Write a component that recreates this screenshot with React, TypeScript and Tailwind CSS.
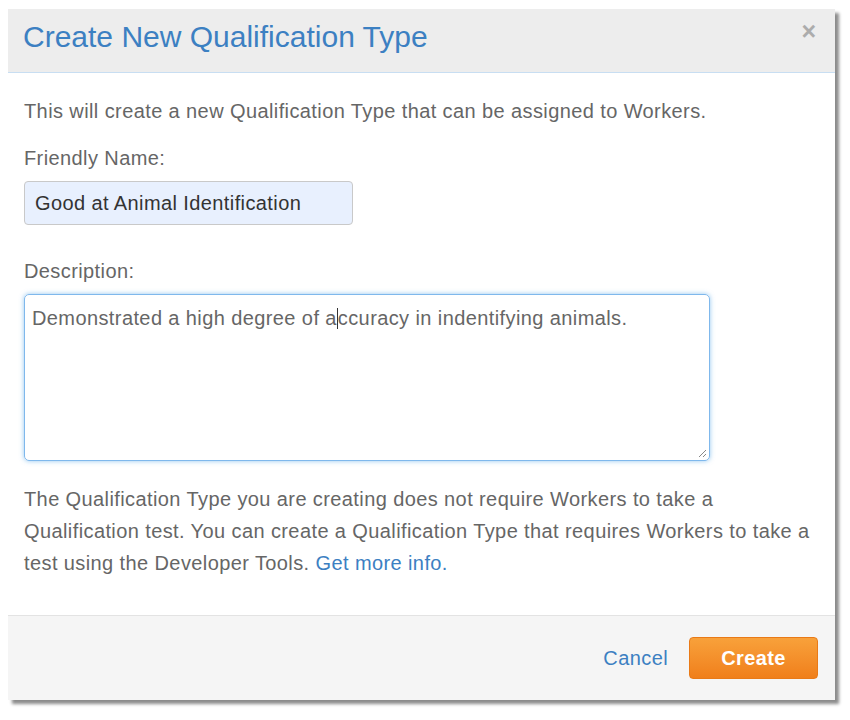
import type { ReactNode } from 'react';

const font = { fontFamily: '"Liberation Sans", Arial, sans-serif' };

function Label({ children }: { children: ReactNode }) {
  return <div className="text-[20px] tracking-[0.4px] leading-[24px] text-[#666]">{children}</div>;
}

function ResizeGrip() {
  return (
    <svg className="absolute right-[2px] bottom-[2px]" width="10" height="10" viewBox="0 0 10 10">
      <path d="M9 2 L2 9 M9 6 L6 9" stroke="#888" strokeWidth="1" fill="none" />
    </svg>
  );
}

export default function App() {
  return (
    <div className="min-h-[720px] bg-white pt-[9px] pl-[8px]" style={font}>
      <div className="w-[827px] h-[691px] bg-white flex flex-col shadow-[4px_4px_3px_rgba(0,0,0,0.45)]">
        {/* header */}
        <div className="h-[64px] bg-[#ededed] border-b border-[#c8def2] flex items-center justify-between pl-[15px] pr-[19px]">
          <h2 className="text-[30px] leading-none text-[#3c80c2] -mt-[8px]">Create New Qualification Type</h2>
          <button className="text-[25px] font-bold leading-none text-[#acacac] -mt-[18px]">×</button>
        </div>

        {/* body */}
        <div className="flex-1 pl-[16px] pt-[26px] text-[20px] tracking-[0.4px]">
          <p className="leading-[24px] text-[#666]">
            This will create a new Qualification Type that can be assigned to Workers.
          </p>

          <div className="mt-[23px]">
            <Label>Friendly Name:</Label>
            <div className="mt-[11px] w-[329px] h-[44px] rounded-[4px] border border-[#c9c9c9] bg-[#e8f0fe] flex items-center pl-[10px] text-[#333]">
              Good at Animal Identification
            </div>
          </div>

          <div className="mt-[34px]">
            <Label>Description:</Label>
            <div className="relative mt-[11px] w-[686px] h-[167px] rounded-[5px] border-[1.5px] border-[#7fb8ec] shadow-[0_0_5px_rgba(102,175,233,0.7)] pl-[7px] pt-[11px] leading-[24px] text-[#666]">
              Demonstrated a high degree of a
              <span className="inline-block w-px h-[21px] bg-[#333] align-[-4px]" />
              ccuracy in indentifying animals.
              <ResizeGrip />
            </div>
          </div>

          <p className="mt-[22px] w-[800px] leading-[32px] text-[#666]">
            The Qualification Type you are creating does not require Workers to take a Qualification test. You can
            create a Qualification Type that requires Workers to take a test using the Developer Tools.{' '}
            <a className="text-[#3c80c2]">Get more info.</a>
          </p>
        </div>

        {/* footer */}
        <div className="h-[85px] bg-[#f5f5f5] border-t border-[#e3e3e3] flex items-center justify-end pr-[17px] gap-[21px] text-[20px] tracking-[0.4px]">
          <a className="text-[#3c80c2] -mt-[1px]">Cancel</a>
          <button className="w-[129px] h-[42px] rounded-[4px] border border-[#e97a17] bg-gradient-to-b from-[#f8a13a] to-[#f07f1a] text-white font-bold">
            Create
          </button>
        </div>
      </div>
    </div>
  );
}
